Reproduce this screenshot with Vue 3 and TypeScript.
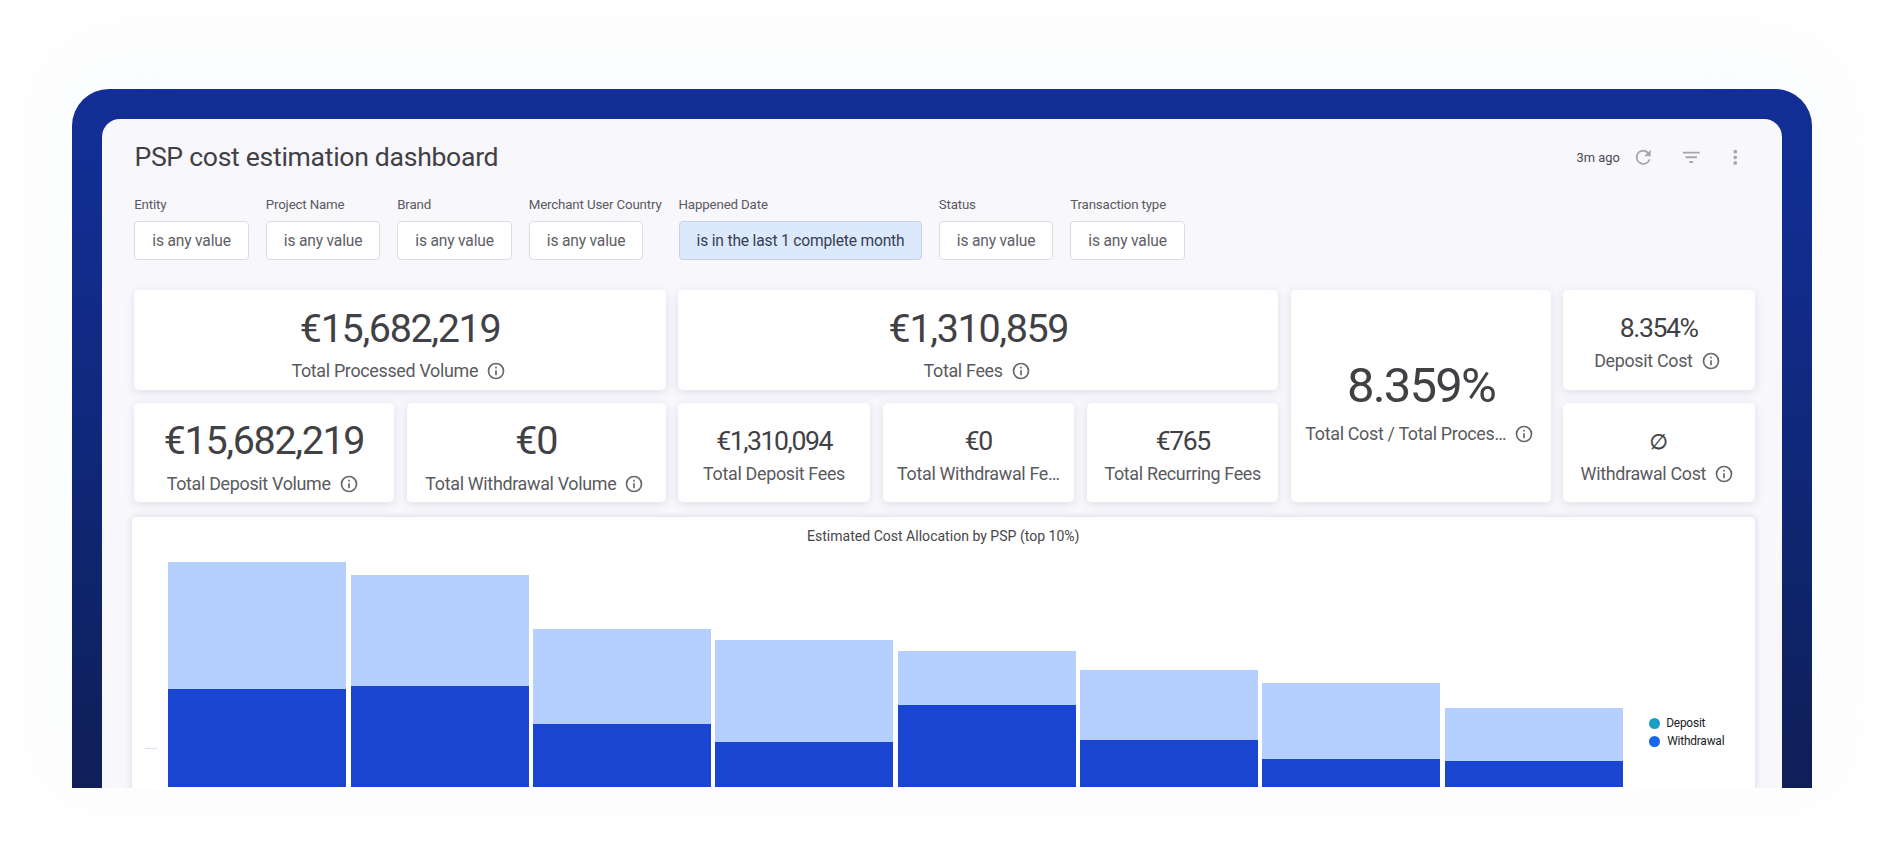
<script setup lang="ts">
interface Filter {
  label: string
  value: string
  width: number
  active?: boolean
}

interface Bar {
  deposit: number
  withdrawal: number
}

const filters: Filter[] = [
  { label: 'Entity', value: 'is any value', width: 131.5 },
  { label: 'Project Name', value: 'is any value', width: 131.5 },
  { label: 'Brand', value: 'is any value', width: 131.5 },
  { label: 'Merchant User Country', value: 'is any value', width: 149.8 },
  { label: 'Happened Date', value: 'is in the last 1 complete month', width: 260.2, active: true },
  { label: 'Status', value: 'is any value', width: 131.5 },
  { label: 'Transaction type', value: 'is any value', width: 131.5 },
]

const bars: Bar[] = [
  { deposit: 127, withdrawal: 98.5 },
  { deposit: 111, withdrawal: 101.3 },
  { deposit: 94.5, withdrawal: 63.5 },
  { deposit: 102.3, withdrawal: 44.7 },
  { deposit: 54, withdrawal: 82.5 },
  { deposit: 70, withdrawal: 47.5 },
  { deposit: 75.2, withdrawal: 28.5 },
  { deposit: 53.5, withdrawal: 26 },
]
</script>

<template>
  <div class="page">
    <div class="frame">
      <main class="board">
        <header class="head">
          <h1>PSP cost estimation dashboard</h1>
          <div class="tools">
            <span class="ago">3m ago</span>
            <svg class="ic refresh" viewBox="0 0 24 24"><path d="M17.65 6.35A7.96 7.96 0 0 0 12 4a8 8 0 1 0 7.73 10h-2.08A6 6 0 1 1 12 6c1.66 0 3.14.69 4.22 1.78L13 11h7V4z" /></svg>
            <svg class="ic filter" viewBox="0 0 24 24"><path d="M10 18h4v-2h-4v2zM3 6v2h18V6H3zm3 7h12v-2H6v2z" /></svg>
            <svg class="ic more" viewBox="0 0 24 24"><path d="M12 8a2 2 0 1 0 0-4 2 2 0 0 0 0 4zm0 2a2 2 0 1 0 0 4 2 2 0 0 0 0-4zm0 6a2 2 0 1 0 0 4 2 2 0 0 0 0-4z" /></svg>
          </div>
        </header>

        <section class="filters">
          <div v-for="f in filters" :key="f.label" class="field" :style="{ width: f.width + 'px' }">
            <span class="flabel">{{ f.label }}</span>
            <span class="fval" :class="{ active: f.active }">{{ f.value }}</span>
          </div>
        </section>

        <section class="tiles">
          <div class="col c1">
            <div class="tile lg">
              <div class="num">€15,682,219</div>
              <div class="cap"><span>Total Processed Volume</span><svg class="info" viewBox="0 0 24 24"><path d="M11 7h2v2h-2zm0 4h2v6h-2zm1-9a10 10 0 1 0 0 20 10 10 0 0 0 0-20zm0 18a8 8 0 1 1 0-16 8 8 0 0 1 0 16z" /></svg></div>
            </div>
            <div class="row">
              <div class="tile lg">
                <div class="num">€15,682,219</div>
                <div class="cap"><span>Total Deposit Volume</span><svg class="info" viewBox="0 0 24 24"><path d="M11 7h2v2h-2zm0 4h2v6h-2zm1-9a10 10 0 1 0 0 20 10 10 0 0 0 0-20zm0 18a8 8 0 1 1 0-16 8 8 0 0 1 0 16z" /></svg></div>
              </div>
              <div class="tile lg">
                <div class="num">€0</div>
                <div class="cap"><span>Total Withdrawal Volume</span><svg class="info" viewBox="0 0 24 24"><path d="M11 7h2v2h-2zm0 4h2v6h-2zm1-9a10 10 0 1 0 0 20 10 10 0 0 0 0-20zm0 18a8 8 0 1 1 0-16 8 8 0 0 1 0 16z" /></svg></div>
              </div>
            </div>
          </div>

          <div class="col c2">
            <div class="tile lg">
              <div class="num">€1,310,859</div>
              <div class="cap"><span>Total Fees</span><svg class="info" viewBox="0 0 24 24"><path d="M11 7h2v2h-2zm0 4h2v6h-2zm1-9a10 10 0 1 0 0 20 10 10 0 0 0 0-20zm0 18a8 8 0 1 1 0-16 8 8 0 0 1 0 16z" /></svg></div>
            </div>
            <div class="row">
              <div class="tile sm">
                <div class="num">€1,310,094</div>
                <div class="cap"><span>Total Deposit Fees</span></div>
              </div>
              <div class="tile sm">
                <div class="num">€0</div>
                <div class="cap"><span>Total Withdrawal Fe…</span></div>
              </div>
              <div class="tile sm">
                <div class="num">€765</div>
                <div class="cap"><span>Total Recurring Fees</span></div>
              </div>
            </div>
          </div>

          <div class="col c3">
            <div class="tile xl">
              <div class="num">8.359%</div>
              <div class="cap"><span>Total Cost / Total Proces…</span><svg class="info" viewBox="0 0 24 24"><path d="M11 7h2v2h-2zm0 4h2v6h-2zm1-9a10 10 0 1 0 0 20 10 10 0 0 0 0-20zm0 18a8 8 0 1 1 0-16 8 8 0 0 1 0 16z" /></svg></div>
            </div>
          </div>

          <div class="col c4">
            <div class="tile sm">
              <div class="num">8.354%</div>
              <div class="cap"><span>Deposit Cost</span><svg class="info" viewBox="0 0 24 24"><path d="M11 7h2v2h-2zm0 4h2v6h-2zm1-9a10 10 0 1 0 0 20 10 10 0 0 0 0-20zm0 18a8 8 0 1 1 0-16 8 8 0 0 1 0 16z" /></svg></div>
            </div>
            <div class="tile sm">
              <div class="num empty">∅</div>
              <div class="cap"><span>Withdrawal Cost</span><svg class="info" viewBox="0 0 24 24"><path d="M11 7h2v2h-2zm0 4h2v6h-2zm1-9a10 10 0 1 0 0 20 10 10 0 0 0 0-20zm0 18a8 8 0 1 1 0-16 8 8 0 0 1 0 16z" /></svg></div>
            </div>
          </div>
        </section>

        <section class="chart">
          <h2>Estimated Cost Allocation by PSP (top 10%)</h2>
          <div class="plot">
            <i class="tick"></i>
            <div class="bars">
              <div v-for="(b, i) in bars" :key="i" class="bar">
                <div class="dep" :style="{ height: b.deposit + 'px' }"></div>
                <div class="wit" :style="{ height: b.withdrawal + 'px' }"></div>
              </div>
            </div>
            <ul class="legend">
              <li><i class="teal"></i><span>Deposit</span></li>
              <li><i class="blue"></i><span>Withdrawal</span></li>
            </ul>
          </div>
        </section>
      </main>
    </div>
  </div>
</template>

<style>
body {
  background: #fefefe;
}
</style>

<style scoped>
* {
  box-sizing: border-box;
}
.page {
  height: 843px;
  padding: 88.5px 72px 0;
  overflow: hidden;
  font-family: Roboto, 'Liberation Sans', sans-serif;
  color: #414145;
}
.frame {
  height: 699.3px;
  padding: 30px 30px 0;
  border-radius: 37px 37px 0 0;
  background: linear-gradient(180deg, #132f97 0%, #122e93 12%, #112a85 35%, #0e266f 65%, #101f5b 95%, #101f5a 100%);
  box-shadow: 0 -20px 70px rgba(225, 240, 255, 0.2);
}
.board {
  height: 669.3px;
  padding: 0 57px 0 33px;
  border-radius: 18px 18px 0 0;
  background: #f8f7fc;
  overflow: hidden;
}
.head {
  display: flex;
  justify-content: space-between;
  height: 77.3px;
  padding-top: 21.6px;
}
h1 {
  margin: 0 0 0 -0.6px;
  font-size: 26.6px;
  line-height: 34px;
  font-weight: 400;
  letter-spacing: -0.3px;
}
.tools {
  display: flex;
  align-items: center;
  height: 35px;
  margin-right: -21.3px;
}
.ago {
  font-size: 12.9px;
  color: #4a4a4e;
  margin-right: 12.5px;
}
.ic {
  width: 22.5px;
  height: 22.5px;
  fill: #a6a6ac;
}
.filter {
  margin-left: 25.5px;
}
.more {
  margin-left: 21px;
}
.filters {
  display: flex;
  height: 94.2px;
}
.field {
  display: flex;
  flex-direction: column;
  align-items: flex-start;
  flex: none;
}
.flabel {
  height: 25px;
  padding-top: 1px;
  margin-left: -0.8px;
  font-size: 13.3px;
  line-height: 16px;
  letter-spacing: -0.15px;
  white-space: nowrap;
  color: #5a5a60;
}
.fval {
  height: 39px;
  padding: 0 16.8px 0 17.1px;
  margin-left: -0.8px;
  border: 1px solid #dcdbe3;
  border-radius: 4px;
  background: #fff;
  font-size: 15.6px;
  line-height: 38px;
  letter-spacing: -0.18px;
  white-space: nowrap;
  color: #606066;
}
.fval.active {
  background: #dce8fb;
  border-color: #c5d2ec;
  color: #363f52;
}
.tiles {
  display: flex;
  height: 212.3px;
}
.col {
  display: flex;
  flex-direction: column;
  gap: 13px;
  flex: none;
}
.c1 {
  width: 531.3px;
  margin-right: 12.7px;
  margin-left: -0.6px;
}
.c2 {
  width: 600px;
  margin-right: 12.7px;
}
.c3 {
  width: 259.8px;
  margin-right: 11.8px;
}
.c4 {
  width: 192px;
}
.row {
  display: flex;
  gap: 13px;
}
.tile {
  flex: 1 1 0;
  min-width: 0;
  display: flex;
  flex-direction: column;
  align-items: center;
  border-radius: 5px;
  background: #fff;
  box-shadow: 0 2px 10px rgba(60, 55, 80, 0.13);
}
.col > .tile,
.row {
  flex: 0 0 99.6px;
}
.col > .tile.xl {
  flex-basis: 212.3px;
}
.num {
  white-space: nowrap;
}
.lg .num {
  margin: 18.8px 0 11.3px;
  font-size: 39.5px;
  line-height: 40px;
  letter-spacing: -1.36px;
}
.sm .num {
  margin: 24px 0 8.2px;
  font-size: 26.6px;
  line-height: 28px;
  letter-spacing: -1.42px;
}
.xl .num {
  margin: 70.6px 0 12.6px;
  font-size: 49px;
  line-height: 50px;
  letter-spacing: -1.82px;
}
.sm .num.empty {
  margin: 25.2px 0 7px;
  font-family: 'DejaVu Sans', sans-serif;
  font-size: 21px;
  letter-spacing: 0;
  -webkit-text-stroke: 0.4px #414145;
}
.cap {
  display: flex;
  align-items: center;
  font-size: 17.9px;
  line-height: 22px;
  letter-spacing: -0.32px;
  white-space: nowrap;
  color: #5a5a5e;
}
.info {
  width: 20px;
  height: 20px;
  margin: 0.5px 2.6px 0 8px;
  fill: #68686c;
}
.chart {
  width: 1622.5px;
  height: 275px;
  margin: 15px 0 0 -3px;
  border-radius: 5px 5px 0 0;
  background: #fff;
  box-shadow: 0 0 7px rgba(60, 55, 80, 0.17);
}
h2 {
  margin: 0;
  padding-top: 9px;
  height: 44.3px;
  font-size: 14.05px;
  line-height: 20px;
  font-weight: 400;
  text-align: center;
  color: #47474b;
}
.plot {
  display: flex;
  height: 225.5px;
}
.tick {
  width: 12px;
  height: 1px;
  margin: 186px 11.4px 0 13px;
  background: #d9ddf5;
}
.bars {
  display: flex;
  align-items: flex-end;
  gap: 4.35px;
  flex: none;
}
.bar {
  width: 178px;
}
.dep {
  background: #b5d0ff;
}
.wit {
  background: #1a45d1;
}
.legend {
  margin: 153px 0 0 26.6px;
  padding: 0;
  list-style: none;
  font-size: 11.9px;
  letter-spacing: -0.2px;
  color: #202124;
}
.legend li {
  display: flex;
  align-items: center;
  height: 17.7px;
}
.legend i {
  width: 11px;
  height: 11px;
  margin-right: 5.8px;
  border-radius: 50%;
}
.legend li:last-child span {
  margin-left: 1px;
}
.teal {
  background: #1a9fc3;
}
.blue {
  background: #1a66ea;
}
</style>
